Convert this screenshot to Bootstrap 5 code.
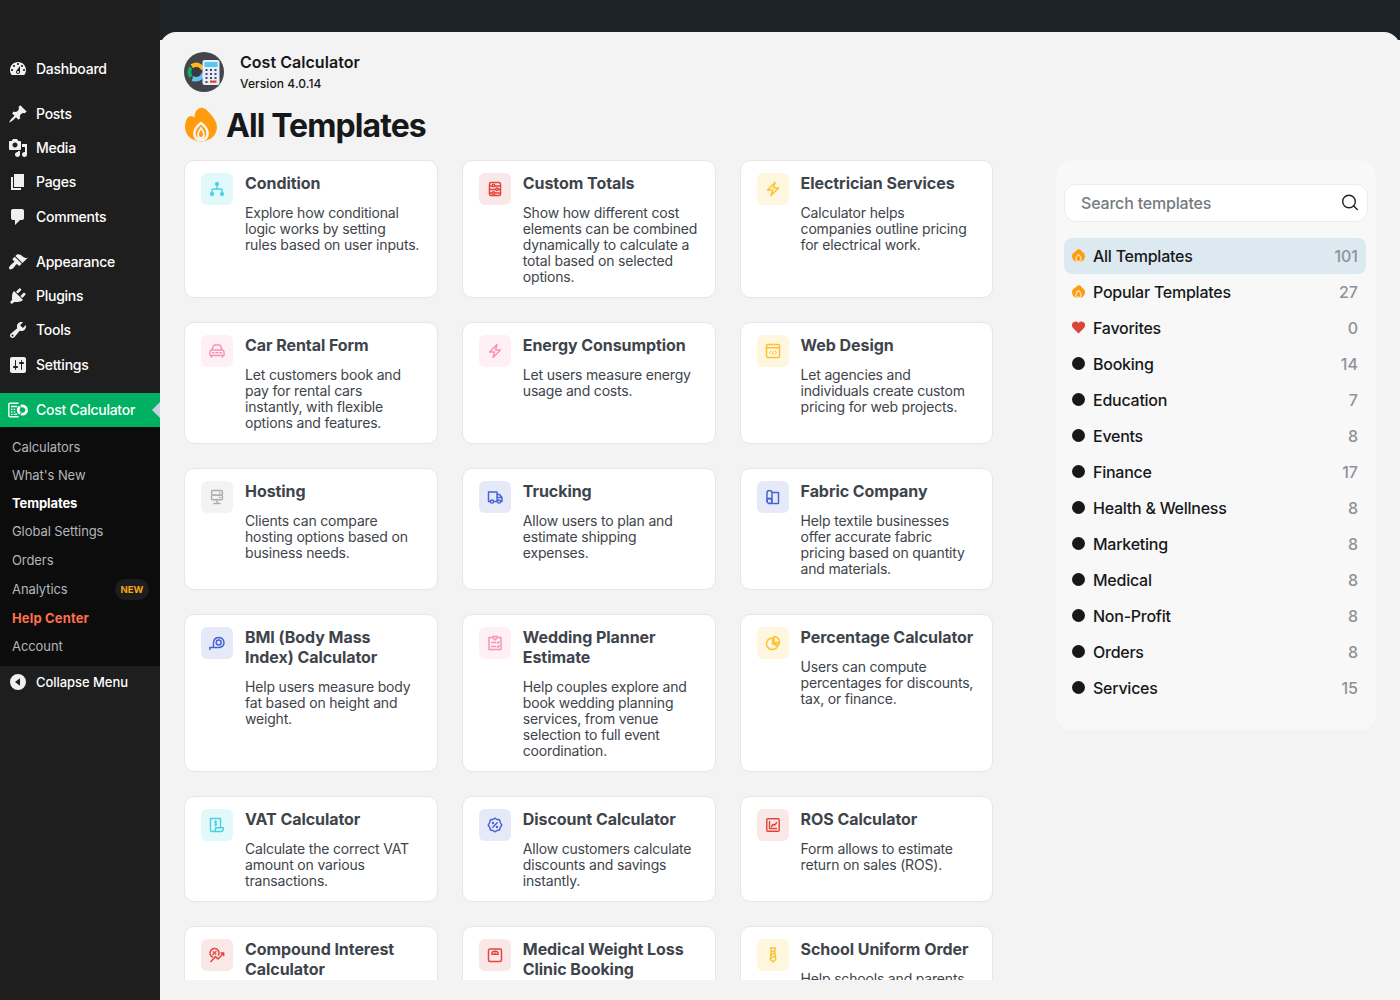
<!DOCTYPE html>
<html lang="en">
<head>
<meta charset="utf-8">
<title>Cost Calculator – Templates</title>
<link href="https://cdn.jsdelivr.net/npm/bootstrap@5.3.0/dist/css/bootstrap.min.css" rel="stylesheet">
<style>
body{font-family:Inter,"Liberation Sans",sans-serif;background:#f3f3f3;height:1000px;overflow:hidden;color:#17181a}
svg{display:block;flex:none}
.side{width:160px;background:#1e1e1e;padding-top:51.6px;flex:none;height:1000px}
.side .nav-link{height:34.33px;padding:0 0 0 8px;gap:8px;color:#fff;font-size:14px;font-weight:500;letter-spacing:-.26px;line-height:18px}
.side .nav-link svg{fill:#f0f0f1;width:20px;height:20px}
.gap-top{margin-top:10.7px}
.side .nav-link.current{background:#00b163;position:relative;margin-top:11.1px}
.current::after{content:"";position:absolute;right:0;top:9px;border:8px solid transparent;border-left-width:0;border-right-color:#ccd0dc}
.side .nav-link.fold{font-size:13px;letter-spacing:-.05px;margin-top:-1.3px}
.subnav{background:#0c0c0c;padding:6px 0 0;height:239px}
.subnav a{display:flex;align-items:center;height:28px;padding-left:12px;font-size:13px;color:#b4b6b9;text-decoration:none;letter-spacing:-.08px}
.subnav a.taller{height:29px;padding-top:2px}
.subnav a.on{color:#fff;font-weight:700;letter-spacing:-.1px}
.subnav a.help{color:#ff6f4d;font-weight:700;letter-spacing:.15px}
.newtag{margin-left:auto;margin-right:11px;background:#1d1d1d;color:#f5a31a;font-size:9.5px;font-weight:700;border-radius:10px;width:34px;height:21px;line-height:21px;text-align:center;letter-spacing:.1px}
.topband{background:#1d2327;height:40px;padding-top:32px;overflow:hidden}
.topcurve{background:#f3f3f3;height:40px;border-radius:16px 16px 0 0}
.main{padding:12px 24px 0}
.appname{font-size:16px;font-weight:600;line-height:20px;letter-spacing:.04px}
.appver{font-size:12px;font-weight:500;line-height:16px;letter-spacing:.08px}
.headline{margin-top:14px;height:36px;gap:9px;padding-left:1px}
.bigtitle{font-size:32px;font-weight:700;line-height:36px;letter-spacing:-.92px;padding-top:3px}
.cards{width:809.4px;height:820px;overflow:hidden;flex:none}
.tpl{border:1px solid #e6e6ea;border-radius:10px;padding:12px 16px;gap:12px;background:#fff;height:100%;color:#3e444b}
.tpl h2{font-size:16px;font-weight:700;line-height:20px;margin:0 0 12px;letter-spacing:-.06px;white-space:nowrap}
.tpl p{font-size:14px;line-height:16px;margin:0;letter-spacing:-.18px;white-space:nowrap}
.tico{width:32px;height:32px;border-radius:6px;flex:none;display:flex;align-items:center;justify-content:center}
.tico svg{width:16px;height:16px;fill:none;stroke:currentColor;stroke-width:1.45;stroke-linecap:round;stroke-linejoin:round}
.c-cyan{background:#e1f9fa;color:#4cd0e6}.c-red{background:#fae7e7;color:#e5443b}.c-yel{background:#fff6df;color:#fcc22d}
.c-pink{background:#fff0f6;color:#f694ae}.c-gray{background:#f3f3f3;color:#a9adb3}.c-blue{background:#e6eaf8;color:#4663d3}
.filters{width:320px;height:570px;border-radius:16px;background:#f8f8f8;padding:24px 8px;margin-left:62.6px}
.searchbox{height:38px;border:1px solid #ececec;border-radius:12px;background:#fff;padding:0 7px 0 16px}
.searchbox input{border:0;padding:0;font-size:16px;font-weight:500;background:none;letter-spacing:-.19px;box-shadow:none!important}
.searchbox input::placeholder{color:#757a80;opacity:1}
.cats{margin-top:16px;width:302px}
.cats a{height:36px;border-radius:8px;padding:0 8px;color:#17181a;text-decoration:none;font-size:16px;font-weight:500;letter-spacing:-.25px}
.cats a.active{background:#dde9f1}
.cats svg{margin:-2px 8px 0 0;width:13px;height:13px}
.cats b{margin-left:auto;font-weight:500;color:#8f9295;letter-spacing:0}
.dotmark{width:13px;height:13px;border-radius:50%;background:#17181a;margin:-2px 8px 0 0}
</style>
</head>
<body>
<svg width="0" height="0" class="position-absolute">
  <symbol id="flame" viewBox="0 0 32 34"><path fill="#ff9b0d" d="M11 3.500Q14-.5 17.500.3Q21 1 24 5Q32 13 32 20Q31.500 27 26 31Q21 34 16 34Q11 34 6 31Q.5 27 0 20Q0 12 4 9Q7 7.500 9.500 10Q9.500 6 11 3.500Z"/><path fill="#ff9b0d" stroke="#f8f3eb" stroke-width="2.600" stroke-linejoin="round" d="M16 15.500Q9.500 20.500 9.300 26Q10 32.600 16 32.600Q22 32.600 22.700 26Q22.500 20.500 16 15.500Z"/><path fill="#ff9b0d" stroke="#f8f3eb" stroke-width="1.800" d="M16 20.500Q13 24.500 13 27.500Q13.500 30.500 16 30.500Q18.500 30.500 19 27.500Q19 24.500 16 20.500Z"/></symbol>
  <symbol id="flame-sm" viewBox="0 0 13 13"><path fill="#ff9b0d" d="M4.500 1.500Q6-.3 8 .4Q9.500 1.200 10 2.800Q13 4 13 7.500Q12.500 12.700 6.500 13Q.5 12.700 0 7.500Q0 4 2.800 3Q3.500 2.500 4.500 1.500Z"/><path fill="#ff9b0d" stroke="#fbeedb" stroke-width="1.100" d="M6.500 5.500Q3.800 7.800 3.800 10Q4.200 12.300 6.500 12.400Q8.800 12.300 9.200 10Q9.200 7.800 6.500 5.500Z"/></symbol>
  <symbol id="bolt" viewBox="0 0 16 16"><path d="M10 1.500L2.500 9H7.500L6 14.500L13.500 7H8.500Z"/></symbol>
</svg>
<div class="d-flex">
<nav class="side">
  <a class="nav-link d-flex align-items-center" href="#"><svg viewBox="0 0 20 20"><path d="M3.760 16h12.480c1.100-1.370 1.760-3.110 1.760-5 0-4.420-3.580-8-8-8s-8 3.580-8 8c0 1.890.66 3.630 1.760 5zM10 4c.55 0 1 .45 1 1s-.45 1-1 1-1-.45-1-1 .45-1 1-1zM6 6c.55 0 1 .45 1 1s-.45 1-1 1-1-.45-1-1 .45-1 1-1zm8 0c.55 0 1 .45 1 1s-.45 1-1 1-1-.45-1-1 .45-1 1-1zm-5.370 5.550L12 7v6c0 1.100-.9 2-2 2s-2-.9-2-2c0-.57.24-1.080.63-1.450zM4 10c.55 0 1 .45 1 1s-.45 1-1 1-1-.45-1-1 .45-1 1-1zm12 0c.55 0 1 .45 1 1s-.45 1-1 1-1-.45-1-1 .45-1 1-1zm-5 3c0-.55-.45-1-1-1s-1 .45-1 1 .45 1 1 1 1-.45 1-1z"/></svg>Dashboard</a>
  <a class="nav-link d-flex align-items-center gap-top" href="#"><svg viewBox="0 0 20 20"><path d="M10.440 3.020l1.820-1.820 6.360 6.350-1.830 1.820c-1.050-.68-2.480-.57-3.410.36l-.75.75c-.92.93-1.040 2.350-.35 3.410l-1.830 1.820-2.410-2.410-2.800 2.790c-.42.42-3.380 2.710-3.800 2.290s1.860-3.390 2.280-3.810l2.790-2.790L4.100 9.360l1.830-1.820c1.050.69 2.480.57 3.400-.36l.75-.75c.93-.92 1.050-2.350.36-3.410z"/></svg>Posts</a>
  <a class="nav-link d-flex align-items-center" href="#"><svg viewBox="0 0 20 20"><path d="M13 11V4c0-.55-.45-1-1-1h-1.670L9 1H5L3.670 3H2c-.55 0-1 .45-1 1v7c0 .55.45 1 1 1h10c.55 0 1-.45 1-1zM7 4.500c1.380 0 2.500 1.120 2.500 2.500S8.380 9.500 7 9.500 4.500 8.380 4.500 7 5.620 4.500 7 4.500zM14 6h5v10.500c0 1.380-1.120 2.500-2.500 2.500S14 17.880 14 16.500s1.120-2.500 2.500-2.500c.17 0 .34.02.5.05V9h-3V6zm-4 8.050V13h2v3.500c0 1.380-1.120 2.500-2.500 2.500S7 17.880 7 16.500 8.120 14 9.500 14c.17 0 .34.02.5.05z"/></svg>Media</a>
  <a class="nav-link d-flex align-items-center" href="#"><svg viewBox="0 0 20 20"><path d="M6 15V2h10v13H6zm-1 1h8v2H3V5h2v11z"/></svg>Pages</a>
  <a class="nav-link d-flex align-items-center" href="#"><svg viewBox="0 0 20 20"><path d="M5 2h9c1.100 0 2 .9 2 2v7c0 1.100-.9 2-2 2h-2l-5 5v-5H5c-1.100 0-2-.9-2-2V4c0-1.100.9-2 2-2z"/></svg>Comments</a>
  <a class="nav-link d-flex align-items-center gap-top" href="#"><svg viewBox="0 0 20 20"><path d="M14.480 11.060L7.410 3.990l1.500-1.500c.5-.56 2.300-.47 3.510.32 1.210.8 1.430 1.280 2.910 2.100 1.180.64 2.450 1.260 4.450.85zm-.71.71L6.700 4.700 4.930 6.470c-.39.39-.39 1.020 0 1.410l1.060 1.060c.39.39.39 1.030 0 1.420-.6.6-1.430 1.110-2.210 1.690-.35.26-.7.53-1.010.84C1.430 14.230.4 16.080 1.400 17.070c.99 1 2.840-.03 4.180-1.360.31-.31.58-.66.85-1.020.57-.78 1.080-1.610 1.690-2.210.39-.39 1.020-.39 1.410 0l1.060 1.060c.39.39 1.020.39 1.410 0z"/></svg>Appearance</a>
  <a class="nav-link d-flex align-items-center" href="#"><svg viewBox="0 0 20 20"><path d="M13.110 4.360L9.870 7.600 8 5.730l3.240-3.240c.35-.34 1.050-.2 1.560.32.52.51.66 1.210.31 1.550zm-8 1.770l.91-1.120 9.010 9.010-1.190.84c-.71.71-2.630 1.160-3.820 1.160H6.140L4.900 17.260c-.59.59-1.540.59-2.120 0-.59-.58-.59-1.530 0-2.120l1.240-1.240v-3.880c0-1.130.4-3.190 1.090-3.890zm7.260 3.970l3.240-3.240c.34-.35 1.040-.21 1.550.31.52.51.66 1.210.31 1.550l-3.240 3.250z"/></svg>Plugins</a>
  <a class="nav-link d-flex align-items-center" href="#"><svg viewBox="0 0 20 20"><path d="M16.680 9.770c-1.340 1.340-3.300 1.670-4.950.99l-5.410 6.520c-.99.99-2.590.99-3.580 0s-.99-2.590 0-3.570l6.520-5.420c-.68-1.650-.35-3.610.99-4.950 1.280-1.280 3.120-1.620 4.720-1.060l-2.890 2.890 2.820 2.820 2.860-2.870c.53 1.580.18 3.390-1.080 4.650zM3.810 16.210c.4.39 1.040.39 1.430 0 .4-.4.4-1.040 0-1.430-.39-.4-1.030-.4-1.430 0-.39.39-.39 1.030 0 1.430z"/></svg>Tools</a>
  <a class="nav-link d-flex align-items-center" href="#"><svg viewBox="0 0 20 20"><path d="M18 16V4c0-1.100-.9-2-2-2H4c-1.100 0-2 .9-2 2v12c0 1.100.9 2 2 2h12c1.100 0 2-.9 2-2zM8 11h1c.55 0 1 .45 1 1s-.45 1-1 1H8v1.500c0 .28-.22.5-.5.5s-.5-.22-.5-.5V13H6c-.55 0-1-.45-1-1s.45-1 1-1h1V5.500c0-.28.22-.5.5-.5s.5.22.5.5V11zm5-2h-1c-.55 0-1-.45-1-1s.45-1 1-1h1V5.500c0-.28.22-.5.5-.5s.5.22.5.5V7h1c.55 0 1 .45 1 1s-.45 1-1 1h-1v5.500c0 .28-.22.5-.5.5s-.5-.22-.5-.5V9z"/></svg>Settings</a>
  <a class="nav-link d-flex align-items-center current" href="#"><svg viewBox="0 0 20 20"><g fill="none" stroke="#fff"><path stroke-width="1.400" d="M10.500 3.200H2.200Q.8 3.200.8 4.600V15.400Q.8 16.800 2.200 16.800H10.500"/><path stroke-width="1.300" d="M3 6.500H9M3 9.300H4.500M5.700 9.300H7.200M3 11.800H4.500M5.700 11.800H7.200M3 14.300H4.500M5.700 14.300H9"/><circle cx="14.400" cy="10" r="4.200" stroke-width="2.800" stroke-dasharray="7.800 1"/></g></svg>Cost Calculator</a>
  <div class="subnav">
    <a href="#">Calculators</a><a href="#">What's New</a><a href="#" class="on">Templates</a><a href="#">Global Settings</a>
    <a href="#" class="taller">Orders</a><a href="#" class="taller">Analytics<span class="newtag">NEW</span></a><a href="#" class="taller help">Help Center</a><a href="#">Account</a>
  </div>
  <a class="nav-link d-flex align-items-center fold" href="#"><svg viewBox="0 0 20 20"><path fill-rule="evenodd" d="M10 2a8 8 0 1 1 0 16a8 8 0 0 1 0-16zM12 6.200L7 10l5 3.800z"/></svg>Collapse Menu</a>
</nav>
<div class="flex-grow-1">
  <div class="topband"><div class="topcurve"></div></div>
  <main class="main">
    <div class="d-flex align-items-center gap-3">
      <svg width="40" height="40" viewBox="0 0 40 40"><circle cx="20" cy="20" r="20" fill="#42454c"/><g fill="none" stroke-width="5"><path stroke="#ffb51f" d="M8 14.500Q14 10.500 18.500 17.500"/><path stroke="#10ae62" stroke-width="4" d="M7 15.500A8 8 0 0 0 7 24.500"/><path stroke="#5fc3ee" d="M8.500 26.500Q15 28.500 19.500 22"/></g><circle cx="12.500" cy="20" r="5" fill="#363940"/><rect x="18.500" y="8" width="17" height="25" rx="2" fill="#e8edfa"/><rect x="20.500" y="10" width="13" height="5" fill="#55caee"/><g fill="#444b5a"><path d="M21.500 17h2v2h-2zM26 17h2v2h-2zM30.500 17h2v2h-2zM21.500 21h2v2h-2zM26 21h2v2h-2zM30.500 21h2v2h-2zM21.500 25h2v2h-2zM26 25h2v2h-2zM30.500 25h2v2h-2zM21.500 29h2v2h-2z"/></g><path fill="#e64338" d="M26 28.500h6.500v2.300h-6.500z"/></svg>
      <div><div class="appname">Cost Calculator</div><div class="appver mt-1">Version 4.0.14</div></div>
    </div>
    <div class="d-flex align-items-center headline"><svg width="32" height="35"><use href="#flame"/></svg><h1 class="bigtitle m-0">All Templates</h1></div>
    <div class="d-flex align-items-start" style="margin-top:18px">
      <div class="cards"><div class="row row-cols-3 g-4">
        <div class="col"><div class="tpl d-flex"><span class="tico c-cyan"><svg viewBox="0 0 16 16"><g fill="currentColor"><circle cx="8" cy="3" r="1.400"/><circle cx="3" cy="13" r="1.400"/><circle cx="13" cy="13" r="1.400"/></g><path d="M8 3V8M3 12.500V9Q3 8 4 8H12Q13 8 13 9V12.500"/></svg></span><div><h2>Condition</h2><p>Explore how conditional<br>logic works by setting<br>rules based on user inputs.</p></div></div></div>
        <div class="col"><div class="tpl d-flex"><span class="tico c-red"><svg viewBox="0 0 16 16"><rect x="2.500" y="1.500" width="11" height="13" rx="1.500"/><path d="M2.500 5H5M8 5H13.500M2.500 8.500H8.500M11.500 8.500H13.500M2.500 12H5M8 12H13.500"/><circle cx="6.500" cy="4.500" r="1.300"/><circle cx="10" cy="8.300" r="1.300"/><circle cx="6.500" cy="12" r="1.300"/></svg></span><div><h2>Custom Totals</h2><p>Show how different cost<br>elements can be combined<br>dynamically to calculate a<br>total based on selected<br>options.</p></div></div></div>
        <div class="col"><div class="tpl d-flex"><span class="tico c-yel"><svg><use href="#bolt"/></svg></span><div><h2>Electrician Services</h2><p>Calculator helps<br>companies outline pricing<br>for electrical work.</p></div></div></div>
        <div class="col"><div class="tpl d-flex"><span class="tico c-pink"><svg viewBox="0 0 16 16"><path d="M3 7L4.300 3Q4.600 2 5.600 2H10.400Q11.400 2 11.700 3L13 7M2.500 7H13.500Q15 7.500 15 9V12.500H1V9Q1 7.500 2.500 7ZM2.500 12.500V14.200M13.500 12.500V14.200M3.500 9.800H5M7 9.800H9M11 9.800H12.500"/></svg></span><div><h2>Car Rental Form</h2><p>Let customers book and<br>pay for rental cars<br>instantly, with flexible<br>options and features.</p></div></div></div>
        <div class="col"><div class="tpl d-flex"><span class="tico c-pink"><svg><use href="#bolt"/></svg></span><div><h2>Energy Consumption</h2><p>Let users measure energy<br>usage and costs.</p></div></div></div>
        <div class="col"><div class="tpl d-flex"><span class="tico c-yel"><svg viewBox="0 0 16 16"><rect x="1.500" y="1.500" width="13" height="13" rx="1.500"/><path d="M1.500 4.800H14.500"/><path stroke-width="1" d="M6 8L4.500 9.500L6 11M10 8L11.500 9.500L10 11M8.500 8L7.500 11"/></svg></span><div><h2>Web Design</h2><p>Let agencies and<br>individuals create custom<br>pricing for web projects.</p></div></div></div>
        <div class="col"><div class="tpl d-flex"><span class="tico c-gray"><svg viewBox="0 0 16 16"><rect x="2.500" y="1.500" width="11" height="4.600" rx="1.500"/><rect x="2.500" y="6.100" width="11" height="4.600" rx="1.500"/><path d="M8 10.700V14.500M5 14.500H11M10.500 3.800H11.200M10.500 8.400H11.200"/></svg></span><div><h2>Hosting</h2><p>Clients can compare<br>hosting options based on<br>business needs.</p></div></div></div>
        <div class="col"><div class="tpl d-flex"><span class="tico c-blue"><svg viewBox="0 0 16 16"><path d="M3 12.500H1.500V3H10V12.500H7M10 5.500H12.500L15 8.500V12.500H14M10 8.500H15"/><circle cx="5" cy="12.500" r="1.600"/><circle cx="12" cy="12.500" r="1.600"/></svg></span><div><h2>Trucking</h2><p>Allow users to plan and<br>estimate shipping<br>expenses.</p></div></div></div>
        <div class="col"><div class="tpl d-flex"><span class="tico c-blue"><svg viewBox="0 0 16 16"><path d="M2 12.500V4Q2 1.500 4.500 1.500Q7 1.500 7 4V12.500M7 3.500H13.500V14.500H4.500M2 9.500H7"/><circle cx="4.500" cy="12" r="2.500"/></svg></span><div><h2>Fabric Company</h2><p>Help textile businesses<br>offer accurate fabric<br>pricing based on quantity<br>and materials.</p></div></div></div>
        <div class="col"><div class="tpl d-flex"><span class="tico c-blue"><svg viewBox="0 0 16 16"><path d="M.8 14.500V12.500H10Q15 12 15 7.500Q14.500 2.500 9.500 2.500Q4.500 3 4.500 8V12.500"/><circle cx="9.700" cy="7.500" r="2.500"/></svg></span><div><h2>BMI (Body Mass<br>Index) Calculator</h2><p>Help users measure body<br>fat based on height and<br>weight.</p></div></div></div>
        <div class="col"><div class="tpl d-flex"><span class="tico c-pink"><svg viewBox="0 0 16 16"><path d="M5.500 2.500H2V14.500H14V2.500H10.500M8 5L5.700 2.800Q5.600 1 7 1.200L8 2L9 1.200Q10.400 1 10.300 2.800ZM4.500 7.500H8.500M4.500 11.500H8.500M10.300 7.500L11 8.200L12.200 6.800M10.300 11.500L11 12.200L12.200 10.800"/></svg></span><div><h2>Wedding Planner<br>Estimate</h2><p>Help couples explore and<br>book wedding planning<br>services, from venue<br>selection to full event<br>coordination.</p></div></div></div>
        <div class="col"><div class="tpl d-flex"><span class="tico c-yel"><svg viewBox="0 0 16 16"><path d="M6.500 3A5.800 5.800 0 1 0 12.700 11L7.500 8.500V3M9 1.500A5.500 5.500 0 0 1 14.500 7.500H9ZM9.500 7.500L13 10.500Q14.300 9.500 14.500 7.500"/></svg></span><div><h2>Percentage Calculator</h2><p>Users can compute<br>percentages for discounts,<br>tax, or finance.</p></div></div></div>
        <div class="col"><div class="tpl d-flex"><span class="tico c-cyan"><svg viewBox="0 0 16 16"><path d="M11.500 10.500V1.500H1.500V13Q1.500 14.500 3 14.500H12.500Q14.500 14 14.500 10.800H6.500V12.500Q6.200 14.500 4 14.500"/><path stroke-width="1.200" d="M7.700 4.500H6Q5.200 5.500 6.500 6Q8 6.500 7.500 8H5.500M6.700 3.700V8.700"/></svg></span><div><h2>VAT Calculator</h2><p>Calculate the correct VAT<br>amount on various<br>transactions.</p></div></div></div>
        <div class="col"><div class="tpl d-flex"><span class="tico c-blue"><svg viewBox="0 0 16 16"><path d="M8 1.200L10 2.500L12.500 2.800L13.300 5.500L14.800 8L13.300 10.300L12.500 13L10 13.500L8 14.800L6 13.500L3.500 13L2.700 10.300L1.200 8L2.700 5.500L3.500 2.800L6 2.500ZM5.800 10.200L10.200 5.800"/><circle cx="6" cy="6" r=".5"/><circle cx="10" cy="10" r=".5"/></svg></span><div><h2>Discount Calculator</h2><p>Allow customers calculate<br>discounts and savings<br>instantly.</p></div></div></div>
        <div class="col"><div class="tpl d-flex"><span class="tico c-red"><svg viewBox="0 0 16 16"><rect x="1.800" y="1.800" width="12.400" height="12.400" rx="1"/><path d="M4.500 4.500V11.500H11.500M6.500 9.500L8 7.500L9.500 8.200L11.700 5.500"/></svg></span><div><h2>ROS Calculator</h2><p>Form allows to estimate<br>return on sales (ROS).</p></div></div></div>
        <div class="col"><div class="tpl d-flex"><span class="tico c-red"><svg viewBox="0 0 16 16"><path d="M3.500 10A4.500 4.500 0 1 1 9.500 8M4 7.500L7 4.500M4.200 4.800V5M6.800 7V7.200M2 14.500L6.500 9.500L9 12L14.500 6.300M12 6H14.700V8.500"/></svg></span><div><h2>Compound Interest<br>Calculator</h2></div></div></div>
        <div class="col"><div class="tpl d-flex"><span class="tico c-red"><svg viewBox="0 0 16 16"><rect x="1.500" y="2" width="13" height="12.500" rx="1.500"/><path d="M4.800 7.300Q4.500 4.200 8 4.200Q11.500 4.200 11.200 7.300ZM8 7V6"/></svg></span><div><h2>Medical Weight Loss<br>Clinic Booking</h2></div></div></div>
        <div class="col"><div class="tpl d-flex"><span class="tico c-yel"><svg viewBox="0 0 16 16"><path d="M5.700 1H10.300L9.700 4.500H6.300ZM6.300 4.500L5.300 12.500L8 15L10.700 12.500L9.700 4.500M6 8.500L9.500 6M5.500 12L10.300 8.500"/></svg></span><div><h2>School Uniform Order</h2><p>Help schools and parents</p></div></div></div>
      </div></div>
      <aside class="filters">
        <div class="searchbox d-flex align-items-center"><input class="form-control" placeholder="Search templates"><svg width="20" height="20" viewBox="0 0 20 20" fill="none" stroke="#222" stroke-width="1.400" stroke-linecap="round"><circle cx="9" cy="8.500" r="6.300"/><path d="M13.600 13.100L17.300 16.600"/></svg></div>
        <div class="cats d-flex flex-column">
          <a href="#" class="d-flex align-items-center active"><svg><use href="#flame-sm"/></svg>All Templates<b>101</b></a>
          <a href="#" class="d-flex align-items-center"><svg><use href="#flame-sm"/></svg>Popular Templates<b>27</b></a>
          <a href="#" class="d-flex align-items-center"><svg viewBox="0 0 13 13"><path fill="#d8453a" d="M6.500 12.500L1 7Q-1 4 .8 1.800Q4-.7 6.500 2Q9-.7 12.200 1.800Q14 4 12 7Z"/></svg>Favorites<b>0</b></a>
          <a href="#" class="d-flex align-items-center"><i class="dotmark"></i>Booking<b>14</b></a>
          <a href="#" class="d-flex align-items-center"><i class="dotmark"></i>Education<b>7</b></a>
          <a href="#" class="d-flex align-items-center"><i class="dotmark"></i>Events<b>8</b></a>
          <a href="#" class="d-flex align-items-center"><i class="dotmark"></i>Finance<b>17</b></a>
          <a href="#" class="d-flex align-items-center"><i class="dotmark"></i>Health &amp; Wellness<b>8</b></a>
          <a href="#" class="d-flex align-items-center"><i class="dotmark"></i>Marketing<b>8</b></a>
          <a href="#" class="d-flex align-items-center"><i class="dotmark"></i>Medical<b>8</b></a>
          <a href="#" class="d-flex align-items-center"><i class="dotmark"></i>Non-Profit<b>8</b></a>
          <a href="#" class="d-flex align-items-center"><i class="dotmark"></i>Orders<b>8</b></a>
          <a href="#" class="d-flex align-items-center"><i class="dotmark"></i>Services<b>15</b></a>
        </div>
      </aside>
    </div>
  </main>
</div>
</div>
<script src="https://cdn.jsdelivr.net/npm/bootstrap@5.3.0/dist/js/bootstrap.bundle.min.js"></script>
</body>
</html>
